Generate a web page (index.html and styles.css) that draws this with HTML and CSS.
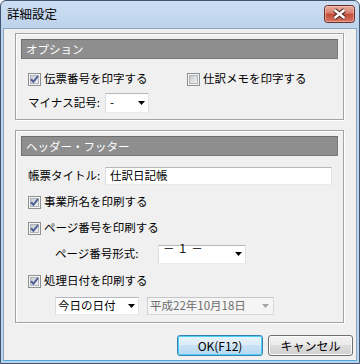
FILE: index.html
```html
<!DOCTYPE html>
<html lang="ja">
<head>
    <meta charset="UTF-8">
    <title>詳細設定</title>
    <link rel="stylesheet" href="styles.css">
</head>
<body>
    <div class="window">
        <div class="titlebar">
            <span class="title">詳細設定</span>
            <svg class="close-btn" width="31" height="18" viewBox="0 0 31 18">
                <defs>
                    <linearGradient id="closeGrad" x1="0" y1="0" x2="0" y2="1">
                        <stop offset="0" stop-color="#e9b0a2"/>
                        <stop offset="0.45" stop-color="#d7806d"/>
                        <stop offset="0.5" stop-color="#c24a35"/>
                        <stop offset="1" stop-color="#d77a66"/>
                    </linearGradient>
                </defs>
                <rect x="0.5" y="0.5" width="30" height="17" rx="3" fill="url(#closeGrad)" stroke="#6b2d24"/>
                <rect x="1.5" y="1.5" width="28" height="15" rx="2" fill="none" stroke="#f6d2c9" stroke-opacity="0.5"/>
                <path d="M10.5 5 L20.5 13 M20.5 5 L10.5 13" stroke="#40201b" stroke-width="4.2"/>
                <path d="M10.5 5 L20.5 13 M20.5 5 L10.5 13" stroke="#ffffff" stroke-width="2.4"/>
            </svg>
        </div>

        <div class="client">
            <div class="group">
                <div class="group-head">オプション</div>
                <div class="row row-first">
                    <label class="check check-wide">
                        <svg class="box" width="13" height="13" viewBox="0 0 13 13">
                            <defs><linearGradient id="cb1" x1="0" y1="0" x2="1" y2="1"><stop offset="0" stop-color="#c4c8ce"/><stop offset="1" stop-color="#f4f4f5"/></linearGradient></defs>
                            <rect x="0.5" y="0.5" width="12" height="12" fill="#f5f5f5" stroke="#8e8f8f"/>
                            <rect x="2.5" y="2.5" width="8" height="8" fill="url(#cb1)" stroke="#b0b3b8"/>
                            <path d="M3 6.2 L5.4 8.8 L10 3" fill="none" stroke="#4b5f96" stroke-width="2"/>
                        </svg>
                        伝票番号を印字する
                    </label>
                    <label class="check">
                        <svg class="box" width="13" height="13" viewBox="0 0 13 13">
                            <defs><linearGradient id="cb2" x1="0" y1="0" x2="1" y2="1"><stop offset="0" stop-color="#c4c8ce"/><stop offset="1" stop-color="#f4f4f5"/></linearGradient></defs>
                            <rect x="0.5" y="0.5" width="12" height="12" fill="#f5f5f5" stroke="#8e8f8f"/>
                            <rect x="2.5" y="2.5" width="8" height="8" fill="url(#cb2)" stroke="#b0b3b8"/>
                        </svg>
                        仕訳メモを印字する
                    </label>
                </div>
                <div class="row row-field">
                    <span class="field-label">マイナス記号:</span>
                    <span class="combo combo-minus">-
                        <svg class="arrow" width="7" height="4" viewBox="0 0 7 4"><polygon points="0,0 7,0 3.5,4"/></svg>
                    </span>
                </div>
            </div>

            <div class="group group-header">
                <div class="group-head">ヘッダー・フッター</div>
                <div class="row row-title">
                    <span class="field-label">帳票タイトル:</span>
                    <span class="textbox">仕訳日記帳</span>
                </div>
                <div class="row row-check">
                    <label class="check">
                        <svg class="box" width="13" height="13" viewBox="0 0 13 13">
                            <defs><linearGradient id="cb3" x1="0" y1="0" x2="1" y2="1"><stop offset="0" stop-color="#c4c8ce"/><stop offset="1" stop-color="#f4f4f5"/></linearGradient></defs>
                            <rect x="0.5" y="0.5" width="12" height="12" fill="#f5f5f5" stroke="#8e8f8f"/>
                            <rect x="2.5" y="2.5" width="8" height="8" fill="url(#cb3)" stroke="#b0b3b8"/>
                            <path d="M3 6.2 L5.4 8.8 L10 3" fill="none" stroke="#4b5f96" stroke-width="2"/>
                        </svg>
                        事業所名を印刷する
                    </label>
                </div>
                <div class="row row-check">
                    <label class="check">
                        <svg class="box" width="13" height="13" viewBox="0 0 13 13">
                            <defs><linearGradient id="cb4" x1="0" y1="0" x2="1" y2="1"><stop offset="0" stop-color="#c4c8ce"/><stop offset="1" stop-color="#f4f4f5"/></linearGradient></defs>
                            <rect x="0.5" y="0.5" width="12" height="12" fill="#f5f5f5" stroke="#8e8f8f"/>
                            <rect x="2.5" y="2.5" width="8" height="8" fill="url(#cb4)" stroke="#b0b3b8"/>
                            <path d="M3 6.2 L5.4 8.8 L10 3" fill="none" stroke="#4b5f96" stroke-width="2"/>
                        </svg>
                        ページ番号を印刷する
                    </label>
                </div>
                <div class="row row-page">
                    <span class="field-label field-label-page">ページ番号形式:</span>
                    <span class="combo combo-page">－ １ －
                        <svg class="arrow" width="7" height="4" viewBox="0 0 7 4"><polygon points="0,0 7,0 3.5,4"/></svg>
                    </span>
                </div>
                <div class="row row-check row-date-check">
                    <label class="check">
                        <svg class="box" width="13" height="13" viewBox="0 0 13 13">
                            <defs><linearGradient id="cb5" x1="0" y1="0" x2="1" y2="1"><stop offset="0" stop-color="#c4c8ce"/><stop offset="1" stop-color="#f4f4f5"/></linearGradient></defs>
                            <rect x="0.5" y="0.5" width="12" height="12" fill="#f5f5f5" stroke="#8e8f8f"/>
                            <rect x="2.5" y="2.5" width="8" height="8" fill="url(#cb5)" stroke="#b0b3b8"/>
                            <path d="M3 6.2 L5.4 8.8 L10 3" fill="none" stroke="#4b5f96" stroke-width="2"/>
                        </svg>
                        処理日付を印刷する
                    </label>
                </div>
                <div class="row row-date">
                    <span class="combo combo-date">今日の日付
                        <svg class="arrow" width="7" height="4" viewBox="0 0 7 4"><polygon points="0,0 7,0 3.5,4"/></svg>
                    </span>
                    <span class="datepicker">平成22年10月18日
                        <svg class="arrow arrow-off" width="7" height="4" viewBox="0 0 7 4"><polygon points="0,0 7,0 3.5,4"/></svg>
                    </span>
                </div>
            </div>

            <div class="buttons">
                <button class="btn btn-default" type="button">OK(F12)</button>
                <button class="btn" type="button">キャンセル</button>
            </div>
        </div>
    </div>
</body>
</html>
```
FILE: styles.css
```css
body {
    margin: 0;
    font-family: "Noto Sans CJK JP", "Noto Sans", sans-serif;
    font-size: 11.5px;
    color: black;
}
.window {
    width: 360px;
    height: 364px;
    box-sizing: border-box;
    display: flex;
    flex-direction: column;
    padding: 0 2px 2px;
    border: 1px solid #3e5470;
    border-radius: 6px 6px 0 0;
    background: linear-gradient(#cddef2, #bcd3ec 28px, #bcd3ec);
}
.titlebar {
    height: 27px;
    display: flex;
    align-items: center;
    justify-content: space-between;
    padding: 0 2px 0 4px;
}
.title {
    font-size: 12.5px;
    line-height: 1;
}
.close-btn {
    display: block;
    margin-top: -1px;
}
.client {
    flex: 1;
    background-color: #f0f0f0;
    border: 1px solid #8fa6c0;
    border-bottom-color: #4aa8da;
    padding: 4px 12px 0 11px;
}
.group {
    width: 329px;
    box-sizing: border-box;
    border: 1px solid #a3a3a3;
    box-shadow: inset 1px 1px 0 #fff, 1px 1px 0 #fff;
    padding: 5px 5px 6px;
}
.group-header {
    margin-top: 10px;
}
.group-head {
    height: 20px;
    box-sizing: border-box;
    background-color: #8e8e8e;
    border: 1px solid #6c6c6c;
    border-right-color: #7a7a7a;
    border-bottom-color: #7a7a7a;
    color: white;
    padding-left: 4px;
    line-height: 18px;
}
.row {
    height: 20px;
    display: flex;
    align-items: center;
    padding-left: 7px;
    line-height: 1;
}
.row-first {
    margin-top: 10px;
}
.row-field {
    margin-top: 4px;
}
.row-title {
    margin-top: 10px;
}
.row-check {
    margin-top: 6px;
}
.row-page {
    margin-top: 6px;
    padding-left: 34px;
}
.row-date-check {
    margin-top: 7px;
}
.row-date {
    margin-top: 5px;
    padding-left: 34px;
    gap: 8px;
}
.check {
    display: flex;
    align-items: center;
    gap: 3px;
}
.check-wide {
    width: 159px;
}
.box {
    display: block;
    flex: none;
}
.field-label {
    width: 77px;
}
.field-label-page {
    width: 103px;
}
.combo,
.textbox,
.datepicker {
    box-sizing: border-box;
    display: flex;
    align-items: center;
    background-color: white;
    border: 1px solid;
    border-color: #b5b7bd #dfe3e9 #e6ebf0 #dadde3;
    padding: 0 3px 0 4px;
}
.combo-minus {
    width: 44px;
    height: 20px;
}
.combo-page {
    width: 88px;
    height: 19px;
    white-space: pre;
}
.combo-date {
    width: 84px;
    height: 18px;
    padding-left: 2px;
}
.textbox {
    width: 227px;
    height: 18px;
}
.datepicker {
    width: 127px;
    height: 18px;
    padding-left: 2px;
    color: #6d6d6d;
    background-color: #f5f5f5;
    border-color: #c6c6c6 #d9d9d9 #d9d9d9 #cfcfcf;
}
.arrow {
    margin-left: auto;
    display: block;
    fill: black;
}
.arrow-off {
    fill: #a5a5a5;
    margin-right: 1px;
}
.buttons {
    display: flex;
    justify-content: flex-end;
    gap: 5px;
    margin-top: 12px;
    margin-right: -9px;
}
.btn {
    height: 21px;
    width: 85px;
    font-family: inherit;
    font-size: 12px;
    color: black;
    border: 1px solid #707070;
    border-radius: 3px;
    background: linear-gradient(#f2f2f2, #ebebeb 45%, #dddddd 50%, #cfcfcf);
    box-shadow: inset 0 0 0 1px #fcfcfc;
    padding: 0;
}
.btn-default {
    width: 86px;
    border-color: #3c7fb1;
    background: linear-gradient(#e9f4fb, #dcecf8 45%, #c8e2f5 50%, #b6d8f0);
    box-shadow: inset 0 0 0 1px #48d3f8;
}
```
